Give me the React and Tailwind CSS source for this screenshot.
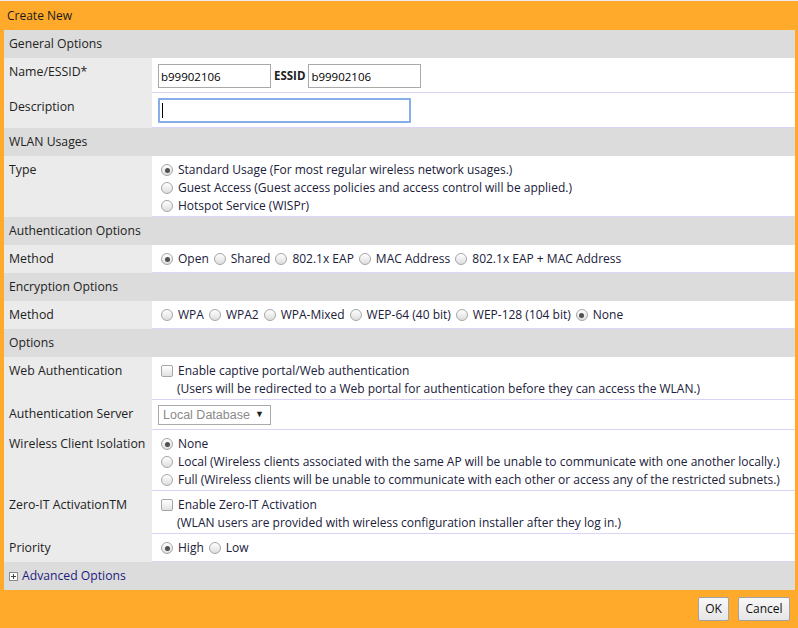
import React from 'react';

const font = "font-['Open_Sans',sans-serif]";

const Radio = ({ checked }) => (
  <span className="relative inline-flex h-[12px] w-[12px] shrink-0 items-center justify-center rounded-full border border-[#a6a6a6] bg-gradient-to-b from-white to-[#dedede]">
    {checked && <span className="h-[5px] w-[5px] rounded-full bg-[#505050]" />}
  </span>
);

const Check = () => (
  <span className="inline-block h-[12px] w-[12px] shrink-0 rounded-[2px] border border-[#a6a6a6] bg-gradient-to-b from-white to-[#e2e2e2]" />
);

const Header = ({ children }) => (
  <div className="flex h-[28px] items-center bg-[#dcdcdc] px-[5px] text-[12.2px] text-[#222]">{children}</div>
);

const Label = ({ children }) => (
  <div className="w-[148px] shrink-0 whitespace-nowrap bg-[#ebebeb] px-[5px] pt-[5px] text-[12.3px] leading-[18px] text-[#222]">
    {children}
  </div>
);

const Row = ({ label, h, children }) => (
  <div className="flex" style={{ height: h }}>
    <Label>{label}</Label>
    <div className="flex-1 whitespace-nowrap border-b border-[#dcd4f6] bg-white pl-[9px] pt-[5px] leading-[18px] text-[#20203a]">
      {children}
    </div>
  </div>
);

const RadioLine = ({ checked, children }) => (
  <div className="flex h-[18px] items-center gap-[5px]">
    <Radio checked={checked} />
    <span>{children}</span>
  </div>
);

const InlineRadios = ({ items, selected }) => (
  <div className="flex h-[18px] items-center">
    {items.map((it, i) => (
      <div key={it} className={`flex items-center gap-[5px] ${i > 0 ? 'ml-[5px]' : ''}`}>
        <Radio checked={it === selected} />
        <span>{it}</span>
      </div>
    ))}
  </div>
);

export default function App() {
  return (
    <div className={`h-[628px] w-[798px] bg-[#f4e8f6] pt-px text-[12px] ${font}`}>
      <div className="flex h-[627px] flex-col bg-[#ffaa2a]">
        <div className="flex h-[29px] items-center px-[7px] text-[12px] text-[#1a1a1a]">Create New</div>

        <div className="ml-[4px] mr-[3px]">
          <Header>General Options</Header>
          <div className="flex h-[35px]">
            <Label>Name/ESSID*</Label>
            <div className="flex flex-1 items-start border-b border-[#dcd4f6] bg-white pl-[6px] pt-[6px]">
              <input
                readOnly
                value="b99902106"
                className={`h-[24px] w-[113px] border border-[#a9a9a9] px-[2px] text-[11.5px] text-black outline-none ${font}`}
              />
              <span className="ml-[3px] mr-[3px] text-[11.5px] font-bold leading-[24px] text-[#222]">ESSID</span>
              <input
                readOnly
                value="b99902106"
                className={`h-[24px] w-[113px] border border-[#a9a9a9] px-[2px] text-[11.5px] text-black outline-none ${font}`}
              />
            </div>
          </div>
          <div className="flex h-[35px]">
            <Label>Description</Label>
            <div className="flex-1 border-b border-[#dcd4f6] bg-white pl-[6px] pt-[5px]">
              <div className="flex h-[25px] w-[253px] items-center rounded-[1px] border-2 border-[#86aee8] px-[2px]">
                <span className="h-[15px] w-px bg-black" />
              </div>
            </div>
          </div>

          <Header>WLAN Usages</Header>
          <Row label="Type" h={61}>
            <RadioLine checked>Standard Usage (For most regular wireless network usages.)</RadioLine>
            <RadioLine>Guest Access (Guest access policies and access control will be applied.)</RadioLine>
            <RadioLine>Hotspot Service (WISPr)</RadioLine>
          </Row>

          <Header>Authentication Options</Header>
          <Row label="Method" h={28}>
            <InlineRadios
              items={['Open', 'Shared', '802.1x EAP', 'MAC Address', '802.1x EAP + MAC Address']}
              selected="Open"
            />
          </Row>

          <Header>Encryption Options</Header>
          <Row label="Method" h={28}>
            <InlineRadios
              items={['WPA', 'WPA2', 'WPA-Mixed', 'WEP-64 (40 bit)', 'WEP-128 (104 bit)', 'None']}
              selected="None"
            />
          </Row>

          <Header>Options</Header>
          <Row label="Web Authentication" h={43}>
            <div className="flex h-[18px] items-center gap-[5px]">
              <Check />
              <span>Enable captive portal/Web authentication</span>
            </div>
            <div className="pl-[16px]">(Users will be redirected to a Web portal for authentication before they can access the WLAN.)</div>
          </Row>
          <div className="flex h-[30px]">
            <Label>Authentication Server</Label>
            <div className="flex-1 border-b border-[#dcd4f6] bg-white pl-[6px] pt-[5px]">
              <div className="flex h-[20px] w-[113px] items-center justify-between border border-[#a9a9a9] bg-white pl-[4px] pr-[6px] font-['Liberation_Sans',sans-serif] text-[12.5px] text-[#8a8a8a]">
                <span>Local Database</span>
                <span className="text-[9px] text-[#222]">▼</span>
              </div>
            </div>
          </div>
          <Row label="Wireless Client Isolation" h={61}>
            <RadioLine checked>None</RadioLine>
            <RadioLine>Local (Wireless clients associated with the same AP will be unable to communicate with one another locally.)</RadioLine>
            <RadioLine>Full (Wireless clients will be unable to communicate with each other or access any of the restricted subnets.)</RadioLine>
          </Row>
          <Row label="Zero-IT ActivationTM" h={43}>
            <div className="flex h-[18px] items-center gap-[5px]">
              <Check />
              <span>Enable Zero-IT Activation</span>
            </div>
            <div className="pl-[16px]">(WLAN users are provided with wireless configuration installer after they log in.)</div>
          </Row>
          <Row label="Priority" h={28}>
            <InlineRadios items={['High', 'Low']} selected="High" />
          </Row>

          <div className="flex h-[28px] items-center gap-[4px] bg-[#dcdcdc] px-[5px]">
            <span className="relative inline-block h-[9px] w-[9px] border border-[#8c8c8c] bg-white">
              <span className="absolute left-[1px] top-[3px] h-px w-[5px] bg-[#444]" />
              <span className="absolute left-[3px] top-[1px] h-[5px] w-px bg-[#444]" />
            </span>
            <span className="text-[12.2px] text-[#1c1c7e]">Advanced Options</span>
          </div>
        </div>

        <div className="flex flex-1 items-start justify-end gap-[9px] pr-[8px] pt-[7px]">
          <button className={`h-[24px] w-[31px] rounded-[2px] border border-[#a3a3a3] bg-gradient-to-b from-[#f8f8f8] to-[#e6e6e6] text-[12px] text-[#111] ${font}`}>OK</button>
          <button className={`h-[24px] w-[52px] rounded-[2px] border border-[#a3a3a3] bg-gradient-to-b from-[#f8f8f8] to-[#e6e6e6] text-[12px] text-[#111] ${font}`}>Cancel</button>
        </div>
      </div>
    </div>
  );
}
